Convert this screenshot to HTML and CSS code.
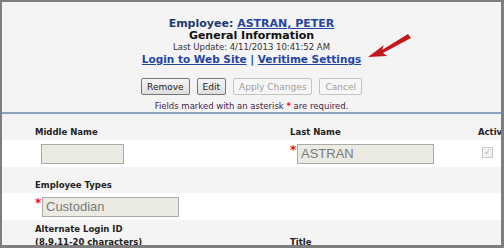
FILE: index.html
```html
<!DOCTYPE html>
<html>
  <head>
    <meta charset="utf-8">
    <title>Employee - General Information</title>
    <link rel="stylesheet" href="styles.css">
  </head>
  <body>
    <div class="window">
      <div class="header">
        <div class="title">Employee: <a href="#">ASTRAN, PETER </a></div>
        <div class="subtitle">General Information</div>
        <div class="updated">Last Update: 4/11/2013 10:41:52 AM</div>
        <div class="links"><a href="#">Login to Web Site</a> | <a href="#">Veritime Settings</a></div>

        <div class="buttons">
          <button class="btn">Remove</button>
          <button class="btn">Edit</button>
          <button class="btn" disabled>Apply Changes</button>
          <button class="btn" disabled>Cancel</button>
        </div>
        <div class="note">Fields marked with an asterisk <span class="req">*</span> are required.</div>

        <svg class="arrow" width="50" height="34" viewBox="0 0 50 34">
          <path d="M43 3 L17 19 L19 14 L3 26 L22 25 L18 22 L46 7 Z" fill="#c4161c"/>
        </svg>
      </div>

      <div class="form">
        <div class="row shade">
          <div class="label">Middle Name</div>
          <div class="label">Last Name</div>
          <div class="label">Activ</div>
        </div>
        <div class="row">
          <div class="field"><span class="input short"></span></div>
          <div class="field"><span class="req">*</span><span class="input wide">ASTRAN</span></div>
          <div class="field"><span class="check">&#10003;</span></div>
        </div>
        <div class="row shade">
          <div class="label">Employee Types</div>
        </div>
        <div class="row">
          <div class="field"><span class="req">*</span><span class="input wide">Custodian</span></div>
        </div>
        <div class="row shade tall">
          <div class="label">Alternate Login ID<br>(8,9,11-20 characters)</div>
          <div class="label">Title</div>
        </div>
      </div>
    </div>
  </body>
</html>
```

FILE: styles.css
```css
* {
  box-sizing: border-box;
}

body {
  margin: 0;
  padding: 0;
  font-family: 'DejaVu Sans', Verdana, sans-serif;
  color: #222;
}

.window {
  width: 504px;
  height: 248px;
  overflow: hidden;
  background-color: #f4f4f4;
  border: 2px solid #7f7f7f;
  border-right-width: 3px;
  border-bottom-width: 3px;
}

.header {
  position: relative;
  text-align: center;
  padding-top: 16px;
  border-bottom: 2px solid #8ca2bf;
  padding-bottom: 1px;
}

.header a {
  color: #2446a2;
}

.title {
  font-size: 11px;
  font-weight: bold;
  color: #1d3b6e;
  line-height: 12px;
}

.subtitle {
  font-size: 11px;
  font-weight: bold;
  color: #111;
  line-height: 12px;
}

.updated {
  font-size: 8.5px;
  color: #333;
  line-height: 11px;
}

.links {
  font-size: 10.5px;
  font-weight: bold;
  color: #2446a2;
  line-height: 13px;
}

.buttons {
  display: flex;
  justify-content: center;
  gap: 7px;
  margin-top: 12px;
}

.btn {
  font-family: 'DejaVu Sans', Verdana, sans-serif;
  font-size: 9px;
  height: 17px;
  padding: 0 5px;
  color: #222;
  background: linear-gradient(#f6f6f6, #dedede);
  border: 1px solid #777;
  border-radius: 2px;
}

.btn[disabled] {
  color: #a0a0a0;
  background: #f6f6f6;
  border-color: #c4c4c4;
}

.note {
  font-size: 8.5px;
  color: #4a2344;
  margin-top: 6px;
  line-height: 10px;
}

.req {
  color: #f01010;
  font-weight: bold;
}

.arrow {
  position: absolute;
  left: 363px;
  top: 29px;
}

.form {
  background-color: #fff;
}

.row {
  display: grid;
  grid-template-columns: 255px 188px 1fr;
  padding-left: 33px;
  height: 27px;
  align-items: center;
  background-color: #fff;
}

.row.shade {
  background-color: #f4f4f4;
  height: 26px;
  align-items: end;
  padding-bottom: 1px;
}

.row.tall {
  height: 30px;
}

.label {
  font-size: 8.5px;
  font-weight: bold;
  line-height: 13px;
  white-space: nowrap;
}

.field {
  display: flex;
  align-items: flex-start;
}

.field .req {
  font-size: 12px;
  line-height: 12px;
  width: 7px;
}

.input {
  display: block;
  height: 20px;
  border: 1px solid #aaa;
  background-color: #ebebe4;
  font-family: 'Liberation Sans', Arial, sans-serif;
  font-size: 13px;
  line-height: 18px;
  padding-left: 3px;
  color: #7a7a7a;
}

.input.short {
  width: 83px;
  margin-left: 6px;
}

.input.wide {
  width: 137px;
}

.check {
  display: block;
  width: 11px;
  height: 11px;
  margin: -3px 0 0 4px;
  border: 1px solid #c8c8c8;
  background-color: #f2f2f2;
  color: #b8b8b8;
  font-size: 9px;
  line-height: 9px;
  text-align: center;
}
```
